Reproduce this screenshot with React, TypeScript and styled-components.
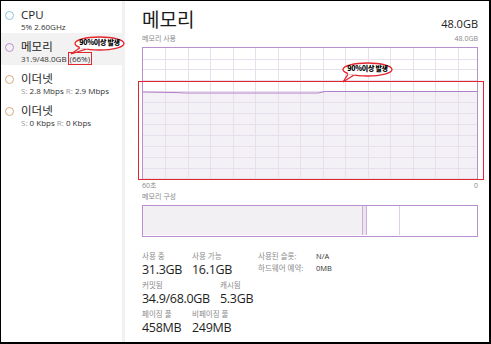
import React from "react";
import styled, { createGlobalStyle } from "styled-components";

const Global = createGlobalStyle`
  html, body { margin: 0; padding: 0; background: #fff; }
  * { box-sizing: border-box; }
  body { font-family: "Open Sans", "Noto Sans CJK KR", sans-serif; }
`;

const FONT = `"Open Sans", "Noto Sans CJK KR", sans-serif`;
const RED = "#e3262e";

const Frame = styled.div`
  width: 491px;
  height: 344px;
  border: 1px solid #000;
  border-right-width: 2px;
  border-bottom-width: 2px;
  display: flex;
  overflow: hidden;
  font-family: ${FONT};
  color: #1b1b1b;
`;

const Sidebar = styled.div`
  position: relative;
  width: 124px;
  flex: none;
  border-right: 3px solid #f1f1f1;
`;

const Item = styled.div<{ $selected?: boolean }>`
  display: grid;
  grid-template-columns: 17px 1fr;
  height: 32px;
  padding: 7px 0 0 3px;
  background: ${(p) => (p.$selected ? "#f2f2f2" : "transparent")};
`;

const Dot = styled.span<{ $color: string }>`
  width: 9px;
  height: 9px;
  border-radius: 50%;
  border: 1.5px solid ${(p) => p.$color};
  margin-top: 3px;
  margin-left: 1px;
`;

const ItemTitle = styled.div`
  font-size: 11.5px;
  line-height: 14px;
  color: #1e1e1e;
`;

const ItemSub = styled.div`
  font-size: 8px;
  line-height: 10px;
  color: #333;
  white-space: nowrap;
`;

const Muted = styled.span`
  color: #9a9a9a;
`;

const Boxed = styled.span`
  border: 1px solid ${RED};
  padding: 0 1px;
  margin-left: 1px;
`;

const CalloutWrap = styled.div<{ $w: number; $h: number }>`
  position: absolute;
  width: ${(p) => p.$w}px;
  height: ${(p) => p.$h}px;
  display: flex;
  align-items: flex-start;
  justify-content: center;
`;

const CalloutText = styled.span`
  position: relative;
  font-family: "Noto Sans CJK KR", "Liberation Serif", serif;
  font-weight: 900;
  font-size: 7px;
  line-height: 1;
  color: #000;
  margin-top: 3px;
  white-space: nowrap;
  letter-spacing: -0.3px;
`;

const CalloutSvg = styled.svg`
  position: absolute;
  left: 0;
  top: 0;
  overflow: visible;
`;

function Callout({ x, y, w, h, tail }: { x: number; y: number; w: number; h: number; tail: [number, number] }) {
  const rx = w / 2 - 1;
  const ry = (h - 6) / 2;
  const cx = w / 2;
  const cy = ry + 1;
  return (
    <CalloutWrap $w={w} $h={h} style={{ left: x, top: y }}>
      <CalloutSvg width={w} height={h}>
        <path
          d={`M ${cx - rx * 0.78} ${cy + ry * 0.62} L ${tail[0]} ${tail[1]} L ${cx - rx * 0.55} ${cy + ry * 0.85}`}
          fill="#fff"
          stroke={RED}
          strokeWidth={1.3}
        />
        <ellipse cx={cx} cy={cy} rx={rx} ry={ry} fill="#fff" stroke={RED} strokeWidth={1.3} />
        <rect x={cx - rx * 0.8} y={cy + ry * 0.4} width={rx * 0.3} height={ry * 0.4} fill="#fff" />
      </CalloutSvg>
      <CalloutText>90%이상 발생</CalloutText>
    </CalloutWrap>
  );
}

const Main = styled.div`
  position: relative;
  flex: 1;
  padding: 0 11px 0 17px;
  display: flex;
  flex-direction: column;
`;

const Header = styled.div`
  display: flex;
  justify-content: space-between;
  align-items: flex-end;
  height: 31px;
`;

const Title = styled.div`
  font-size: 19px;
  line-height: 24px;
  color: #1a1a1a;
`;

const TitleRight = styled.div`
  font-size: 11px;
  line-height: 14px;
  padding-bottom: 1px;
`;

const SmallRow = styled.div<{ $top?: number }>`
  display: flex;
  justify-content: space-between;
  font-size: 7px;
  line-height: 9px;
  color: #8a8a8a;
  margin-top: ${(p) => p.$top ?? 0}px;
`;

const ChartBox = styled.div`
  width: 336px;
  height: 133px;
  border: 1px solid #b990cd;
  margin-top: 4px;
  background: #fff;
`;

const CompBox = styled.div`
  width: 336px;
  height: 32px;
  border: 1.5px solid #b990cd;
  margin-top: 4px;
`;

const Stats = styled.div`
  display: flex;
  flex-direction: column;
  gap: 2px;
  margin-top: 14px;
`;

const StatRow = styled.div`
  display: flex;
  align-items: flex-start;
`;

const Stat = styled.div<{ $w?: number }>`
  width: ${(p) => (p.$w ? `${p.$w}px` : "auto")};
  flex: none;
  display: flex;
  flex-direction: column;
`;

const StatLabel = styled.div`
  font-size: 7.5px;
  line-height: 10px;
  color: #8a8a8a;
  white-space: nowrap;
`;

const StatValue = styled.div`
  font-size: 12.5px;
  line-height: 17px;
  color: #1e1e1e;
  white-space: nowrap;
  letter-spacing: -0.3px;
`;

const SlotGrid = styled.div`
  display: grid;
  grid-template-columns: 58px auto;
  row-gap: 2px;
  font-size: 7.5px;
  line-height: 10px;
`;

const SlotValue = styled.div`
  color: #333;
`;

const RedFrame = styled.div`
  position: absolute;
  left: 13px;
  top: 80px;
  width: 346px;
  height: 99px;
  border: 1.5px solid ${RED};
  pointer-events: none;
`;

function MemChart() {
  const W = 334;
  const H = 131;
  const vx: number[] = [];
  for (let x = 22; x < W; x += 22.5) vx.push(Math.round(x));
  const hy: number[] = [];
  for (let y = 10.5; y < H; y += 10.9) hy.push(Math.round(y));
  const line = `M0 44 L30 44.5 L45 45 L175 45 L182 43.5 L${W} 43.5`;
  return (
    <svg width={W} height={H} style={{ display: "block" }}>
      <path d={`${line} L${W} ${H} L0 ${H} Z`} fill="#f4f1f6" />
      {vx.map((x) => (
        <line key={"v" + x} x1={x + 0.5} x2={x + 0.5} y1={0} y2={H} stroke="#e7dfeb" strokeWidth={1} />
      ))}
      {hy.map((y) => (
        <line key={"h" + y} x1={0} x2={W} y1={y + 0.5} y2={y + 0.5} stroke="#e7dfeb" strokeWidth={1} />
      ))}
      <path d={line} fill="none" stroke="#b07fc8" strokeWidth={1.2} />
    </svg>
  );
}

function CompChart() {
  const W = 333;
  const H = 29;
  return (
    <svg width={W} height={H} style={{ display: "block" }}>
      <rect x={0} y={0} width={219} height={H} fill="#f2f0f3" />
      <rect x={219} y={0} width={5} height={H} fill="#ece4f0" />
      <line x1={219.5} x2={219.5} y1={0} y2={H} stroke="#c9b2d6" />
      <line x1={223.5} x2={223.5} y1={0} y2={H} stroke="#c9b2d6" />
      <line x1={256.5} x2={256.5} y1={0} y2={H} stroke="#ddd0e4" />
    </svg>
  );
}

export default function App() {
  return (
    <>
      <Global />
      <Frame>
        <Sidebar>
          <Item>
            <Dot $color="#8fc3de" />
            <div>
              <ItemTitle>CPU</ItemTitle>
              <ItemSub>5% 2.60GHz</ItemSub>
            </div>
          </Item>
          <Item $selected>
            <Dot $color="#c18fd2" />
            <div>
              <ItemTitle>메모리</ItemTitle>
              <ItemSub>
                31.9/48.0GB<Boxed>(66%)</Boxed>
              </ItemSub>
            </div>
          </Item>
          <Item>
            <Dot $color="#d7aa7a" />
            <div>
              <ItemTitle>이더넷</ItemTitle>
              <ItemSub>
                <Muted>S:</Muted> 2.8 Mbps <Muted>R:</Muted> 2.9 Mbps
              </ItemSub>
            </div>
          </Item>
          <Item>
            <Dot $color="#d7aa7a" />
            <div>
              <ItemTitle>이더넷</ItemTitle>
              <ItemSub>
                <Muted>S:</Muted> 0 Kbps <Muted>R:</Muted> 0 Kbps
              </ItemSub>
            </div>
          </Item>
          <Callout x={73} y={35} w={51} h={19} tail={[-3, 18]} />
        </Sidebar>
        <Main>
          <Header>
            <Title>메모리</Title>
            <TitleRight>48.0GB</TitleRight>
          </Header>
          <SmallRow $top={2}>
            <span>메모리 사용</span>
            <span>48.0GB</span>
          </SmallRow>
          <ChartBox>
            <MemChart />
          </ChartBox>
          <SmallRow $top={1}>
            <span>60초</span>
            <span>0</span>
          </SmallRow>
          <SmallRow $top={2}>
            <span>메모리 구성</span>
          </SmallRow>
          <CompBox>
            <CompChart />
          </CompBox>
          <Stats>
            <StatRow>
              <Stat $w={50}>
                <StatLabel>사용 중</StatLabel>
                <StatValue>31.3GB</StatValue>
              </Stat>
              <Stat $w={66}>
                <StatLabel>사용 가능</StatLabel>
                <StatValue>16.1GB</StatValue>
              </Stat>
              <SlotGrid>
                <StatLabel>사용된 슬롯:</StatLabel>
                <SlotValue>N/A</SlotValue>
                <StatLabel>하드웨어 예약:</StatLabel>
                <SlotValue>0MB</SlotValue>
              </SlotGrid>
            </StatRow>
            <StatRow>
              <Stat $w={78}>
                <StatLabel>커밋됨</StatLabel>
                <StatValue>34.9/68.0GB</StatValue>
              </Stat>
              <Stat>
                <StatLabel>캐시됨</StatLabel>
                <StatValue>5.3GB</StatValue>
              </Stat>
            </StatRow>
            <StatRow>
              <Stat $w={50}>
                <StatLabel>페이징 풀</StatLabel>
                <StatValue>458MB</StatValue>
              </Stat>
              <Stat>
                <StatLabel>비페이징 풀</StatLabel>
                <StatValue>249MB</StatValue>
              </Stat>
            </StatRow>
          </Stats>
          <RedFrame />
          <Callout x={217} y={61} w={51} h={19} tail={[1, 20]} />
        </Main>
      </Frame>
    </>
  );
}
